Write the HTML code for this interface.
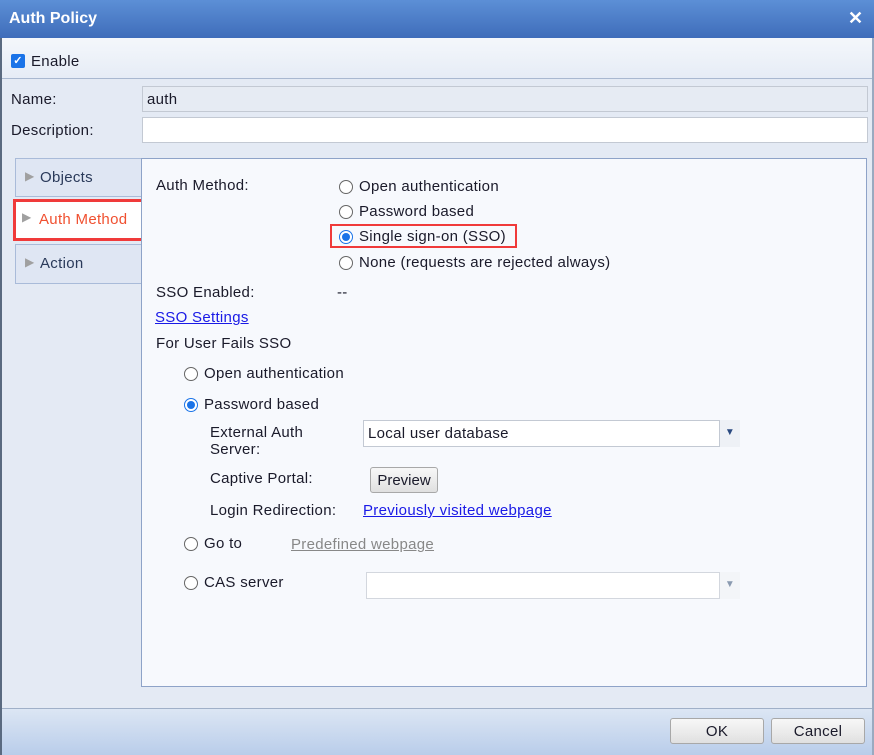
<!DOCTYPE html>
<html><head><style>
*{box-sizing:border-box;margin:0;padding:0}
body{width:874px;height:755px;overflow:hidden;background:#e4eaf4;font-family:"Liberation Sans",sans-serif;font-size:15px;letter-spacing:0.3px;color:#1a1a2a;position:relative}
.a{position:absolute;white-space:nowrap}
.t{position:absolute;line-height:18px;white-space:nowrap}
.r{position:absolute;width:14px;height:14px;border:1px solid #666;border-radius:50%;background:#fff}
.r.on{border-color:#1a73e8}
.r.on::after{content:"";position:absolute;left:2px;top:2px;width:8px;height:8px;border-radius:50%;background:#1a73e8}
.tab{position:absolute;left:15px;width:127px;background:#dfe6f3;border:1px solid #a9bbd9;border-right:none}
.arr{position:absolute;left:9px;color:#a0a0a0;font-size:12px}
a{color:#1a1ae6;text-decoration:underline}
.btn{position:absolute;height:26px;border:1px solid #a8a8a8;border-radius:3px;background:linear-gradient(#f7f7f7,#ebebeb 55%,#e0e0e0);text-align:center;line-height:25px}
</style></head><body>
<div class="a" style="left:0;top:0;width:874px;height:38px;background:linear-gradient(#5c8fd6,#3f6dba);"></div>
<div class="t" style="left:9px;top:10px;color:#fff;font-weight:bold;font-size:16px;letter-spacing:0">Auth Policy</div>
<div class="t" style="left:848px;top:9px;color:#fff;font-weight:bold;font-size:18px">✕</div>
<div class="a" style="left:0;top:38px;width:2px;height:717px;background:#5a6a80"></div>
<div class="a" style="left:872px;top:38px;width:2px;height:717px;background:#9aaac0"></div>
<div class="a" style="left:2px;top:38px;width:870px;height:40px;background:linear-gradient(#f4f7fb,#e6ecf6)"></div>
<div class="a" style="left:11px;top:54px;width:14px;height:14px;background:#1a73e8;border-radius:2px;color:#fff;font-size:11px;line-height:14px;text-align:center;font-weight:bold">✓</div>
<div class="t" style="left:31px;top:53px">Enable</div>
<div class="a" style="left:2px;top:78px;width:870px;height:1px;background:#a9b8d0"></div>
<div class="t" style="left:11px;top:91px">Name:</div>
<div class="a" style="left:142px;top:86px;width:726px;height:26px;background:#e6ebf3;border:1px solid #c3c9d3"></div>
<div class="t" style="left:147px;top:91px">auth</div>
<div class="t" style="left:11px;top:122px">Description:</div>
<div class="a" style="left:142px;top:117px;width:726px;height:26px;background:#fff;border:1px solid #c3c9d3"></div>

<div class="tab" style="top:158px;height:39px"><span class="arr" style="top:10px">▶</span><span class="t" style="left:24px;top:10px;color:#2a3a5a">Objects</span></div>
<div class="a" style="left:13px;top:199px;width:134px;height:42px;background:#fff;border:3px solid #f03a3a"></div>
<span class="arr" style="position:absolute;left:22px;top:210px">▶</span>
<div class="t" style="left:39px;top:211px;color:#f05030">Auth Method</div>
<div class="tab" style="top:244px;height:40px"><span class="arr" style="top:10px">▶</span><span class="t" style="left:24px;top:10px;color:#2a3a5a">Action</span></div>

<div class="a" style="left:141px;top:158px;width:726px;height:529px;background:#f7f9fd;border:1px solid #8ea3c8"></div>
<div class="t" style="left:156px;top:177px">Auth Method:</div>
<div class="r" style="left:339px;top:180px"></div><div class="t" style="left:359px;top:178px">Open authentication</div>
<div class="r" style="left:339px;top:205px"></div><div class="t" style="left:359px;top:203px">Password based</div>
<div class="a" style="left:330px;top:224px;width:187px;height:24px;border:2px solid #f03a3a"></div>
<div class="r on" style="left:339px;top:230px"></div><div class="t" style="left:359px;top:228px">Single sign-on (SSO)</div>
<div class="r" style="left:339px;top:256px"></div><div class="t" style="left:359px;top:254px">None (requests are rejected always)</div>
<div class="t" style="left:156px;top:284px">SSO Enabled:</div>
<div class="t" style="left:337px;top:284px">--</div>
<div class="t" style="left:155px;top:309px"><a>SSO Settings</a></div>
<div class="t" style="left:156px;top:335px">For User Fails SSO</div>
<div class="r" style="left:184px;top:367px"></div><div class="t" style="left:204px;top:365px">Open authentication</div>
<div class="r on" style="left:184px;top:398px"></div><div class="t" style="left:204px;top:396px">Password based</div>
<div class="t" style="left:210px;top:424px">External Auth</div>
<div class="t" style="left:210px;top:441px">Server:</div>
<div class="a" style="left:363px;top:420px;width:377px;height:27px;background:#fff;border:1px solid #c3c9d3"></div>
<div class="a" style="left:719px;top:420px;width:21px;height:27px;background:#eef1f6;border-left:1px solid #c3c9d3;color:#2a4a80;font-size:10px;text-align:center;line-height:25px">▼</div>
<div class="t" style="left:368px;top:425px">Local user database</div>
<div class="t" style="left:210px;top:470px">Captive Portal:</div>
<div class="btn" style="left:370px;top:467px;width:68px;letter-spacing:0">Preview</div>
<div class="t" style="left:210px;top:502px">Login Redirection:</div>
<div class="t" style="left:363px;top:502px"><a>Previously visited webpage</a></div>
<div class="r" style="left:184px;top:537px"></div><div class="t" style="left:204px;top:535px">Go to</div>
<div class="t" style="left:291px;top:536px;color:#888;text-decoration:underline">Predefined webpage</div>
<div class="r" style="left:184px;top:576px"></div><div class="t" style="left:204px;top:574px">CAS server</div>
<div class="a" style="left:366px;top:572px;width:374px;height:27px;background:#fff;border:1px solid #d3d7de"></div>
<div class="a" style="left:719px;top:572px;width:21px;height:27px;background:#f3f5f8;border-left:1px solid #d3d7de;color:#8a9ab0;font-size:10px;text-align:center;line-height:25px">▼</div>

<div class="a" style="left:2px;top:708px;width:870px;height:47px;background:linear-gradient(#dce6f4,#b9cdea);border-top:1px solid #a0b0c8"></div>
<div class="btn" style="left:670px;top:718px;width:94px">OK</div>
<div class="btn" style="left:771px;top:718px;width:94px">Cancel</div>
</body></html>
